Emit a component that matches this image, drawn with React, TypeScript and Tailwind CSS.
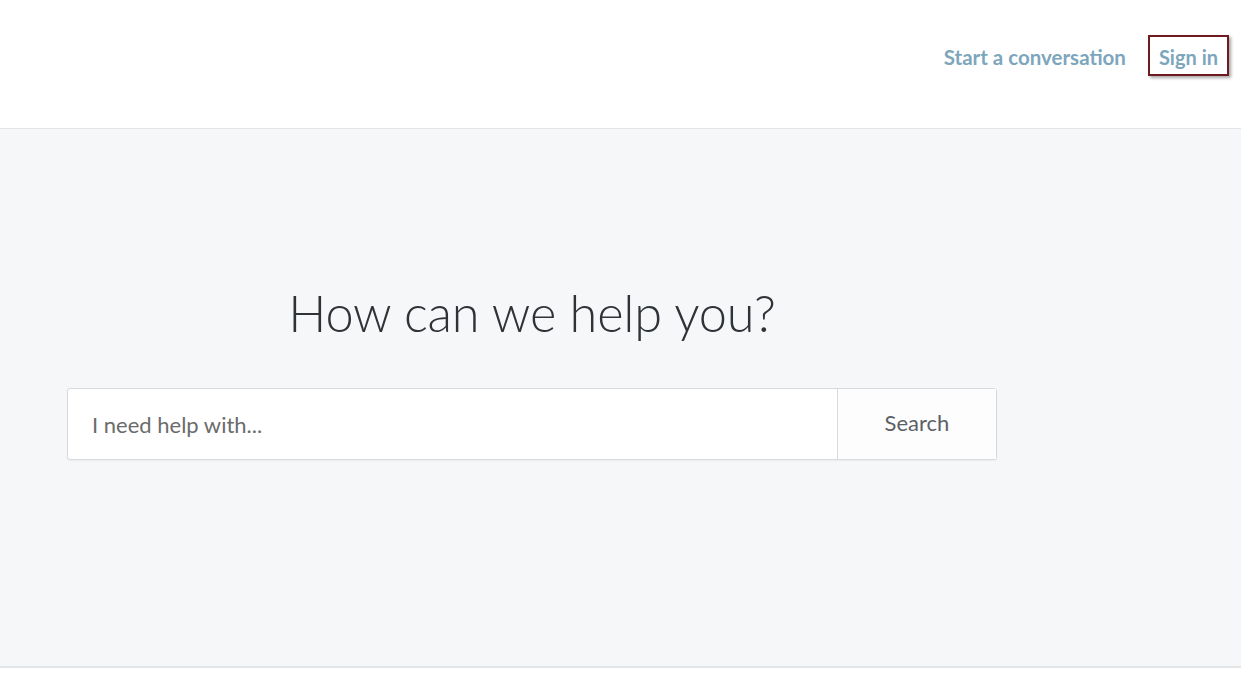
export default function App() {
  return (
    <div className="min-h-[679px] bg-white font-['Lato','Open_Sans',sans-serif]">
      <header className="flex h-[129px] items-start justify-end border-b border-[#e2e4e8] bg-white pr-3 pt-[35px]">
        <nav className="flex items-center gap-[22px]">
          <a className="pt-[3px] text-[20.5px] font-bold text-[#7da6bd]" href="#">
            Start a conversation
          </a>
          <a
            className="flex h-[41px] items-center border-2 border-[#6e1b1f] px-[9px] pt-[3px] text-[20px] font-bold text-[#7da6bd] shadow-[2px_2px_3px_rgba(0,0,0,0.35)]"
            href="#"
          >
            Sign in
          </a>
        </nav>
      </header>

      <main className="h-[539px] border-b-2 border-[#e3e5e8] bg-[#f6f7f9]">
        <div className="ml-[67px] w-[930px] pt-[148px]">
          <h1 className="text-center text-[50.5px] leading-[72px] font-light tracking-[-0.2px] text-[#2f3338]">
            How can we help you?
          </h1>
          <form className="mt-[39px] flex h-[72px] rounded-[3px] border border-[#d8dadd] bg-white shadow-[0_1px_2px_rgba(0,0,0,0.05)]">
            <input
              className="min-w-0 flex-1 bg-transparent px-6 text-[22px] text-[#5f5f5f] outline-none placeholder:text-[#6b6b6b]"
              placeholder="I need help with..."
            />
            <button
              type="button"
              className="w-[159px] border-l border-[#d8dadd] bg-[#fdfdfd] pb-1 text-[22px] text-[#5c6166]"
            >
              Search
            </button>
          </form>
        </div>
      </main>
    </div>
  );
}
